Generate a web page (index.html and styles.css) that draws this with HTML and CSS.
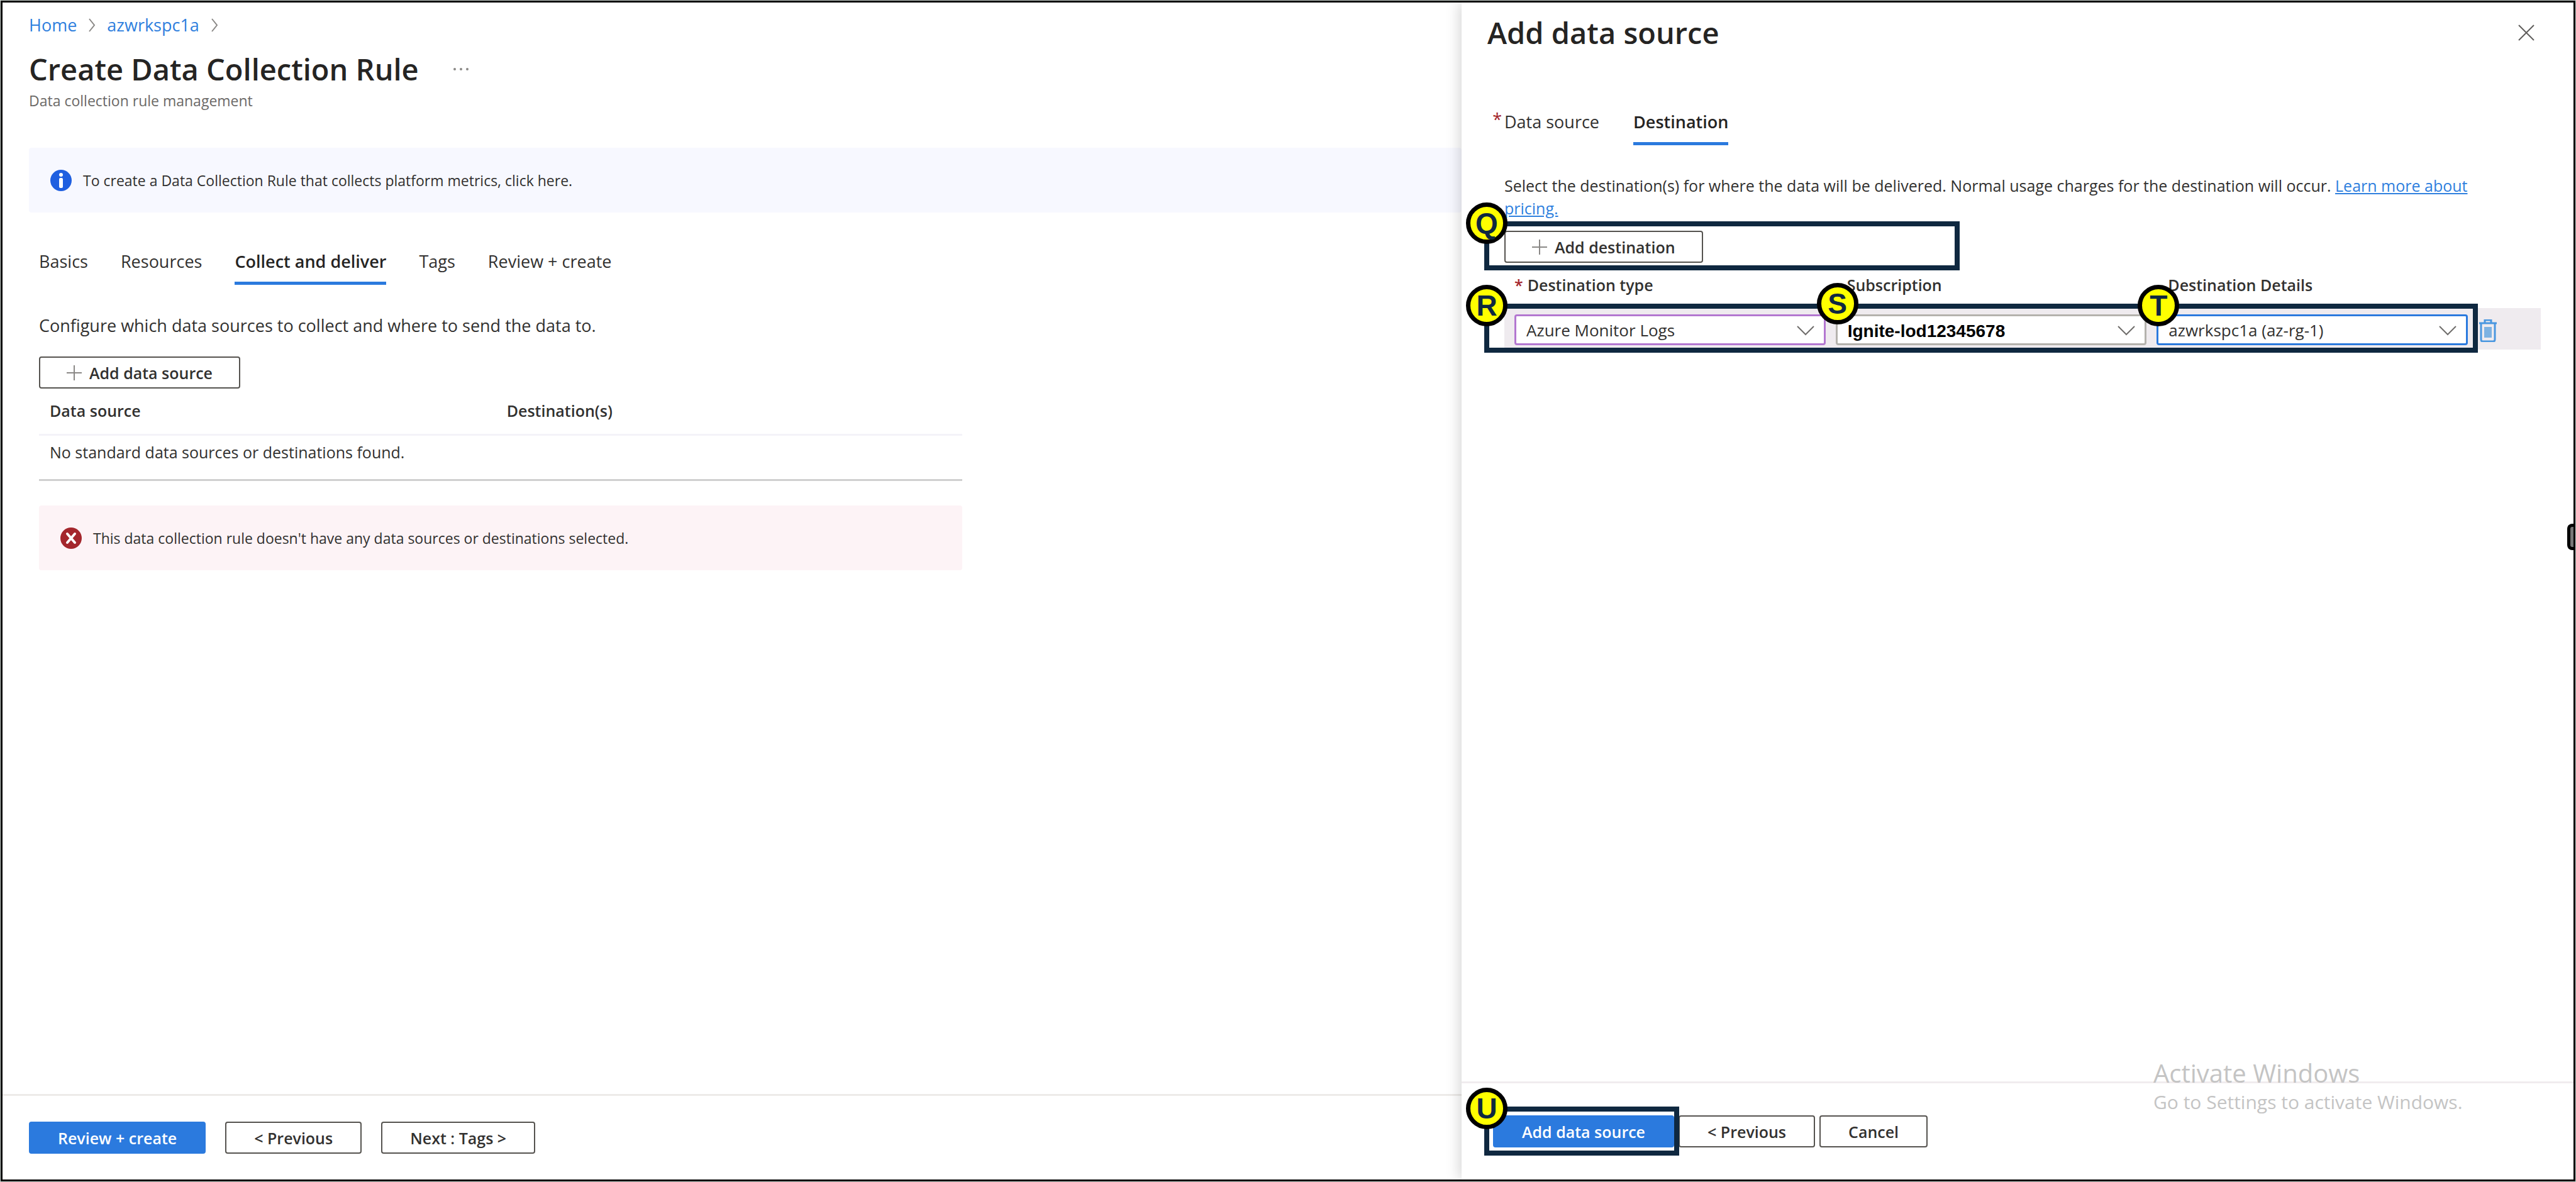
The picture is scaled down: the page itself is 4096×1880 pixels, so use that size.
FILE: index.html
```html
<!DOCTYPE html>
<html lang="en">
<head>
<meta charset="utf-8">
<title>Create Data Collection Rule</title>
<meta name="viewport" content="width=device-width, initial-scale=1">
<link rel="stylesheet" href="styles.css">
</head>
<body>
<div class="frame">
  <main class="page">
    <nav class="breadcrumb" aria-label="Breadcrumb">
      <a href="#">Home</a>
      <svg class="crumb-arrow" viewBox="0 0 12 22" aria-hidden="true"><path d="M2 1l8 10-8 10"/></svg>
      <a href="#">azwrkspc1a</a>
      <svg class="crumb-arrow" viewBox="0 0 12 22" aria-hidden="true"><path d="M2 1l8 10-8 10"/></svg>
    </nav>
    <div class="title-row">
      <h1 class="title">Create Data Collection Rule</h1>
      <button class="more" type="button" aria-label="More">
        <svg viewBox="0 0 26 6" aria-hidden="true"><circle cx="3" cy="3" r="2"/><circle cx="13" cy="3" r="2"/><circle cx="23" cy="3" r="2"/></svg>
      </button>
    </div>
    <p class="subtitle">Data collection rule management</p>

    <div class="banner banner-info">
      <svg class="banner-icon" viewBox="0 0 34 34" aria-hidden="true"><circle cx="17" cy="17" r="17" fill="#1f5fe0"/><circle cx="17" cy="8" r="3" fill="#fff"/><rect x="14" y="13" width="6" height="16" rx="2" fill="#fff"/></svg>
      <span>To create a Data Collection Rule that collects platform metrics, click here.</span>
    </div>

    <div class="content">
      <div class="tabs" role="tablist">
        <button class="tab" role="tab" type="button">Basics</button>
        <button class="tab" role="tab" type="button">Resources</button>
        <button class="tab tab-active" role="tab" type="button" aria-selected="true">Collect and deliver</button>
        <button class="tab" role="tab" type="button">Tags</button>
        <button class="tab" role="tab" type="button">Review + create</button>
      </div>
      <p class="intro">Configure which data sources to collect and where to send the data to.</p>
      <button class="button button-add" type="button">
        <svg class="plus" viewBox="0 0 24 24" aria-hidden="true"><path d="M12 0v24M0 12h24"/></svg>Add data source
      </button>
      <table class="sources">
        <thead><tr><th class="source-column">Data source</th><th>Destination(s)</th></tr></thead>
        <tbody><tr><td colspan="2">No standard data sources or destinations found.</td></tr></tbody>
      </table>
      <div class="banner banner-error">
        <svg class="banner-icon" viewBox="0 0 34 34" aria-hidden="true"><circle cx="17" cy="17" r="17" fill="#a4262c"/><path d="M11 10l12 14M23 10L11 24" stroke="#fff" stroke-width="4" stroke-linecap="round"/></svg>
        <span>This data collection rule doesn't have any data sources or destinations selected.</span>
      </div>
    </div>

    <footer class="page-footer">
      <button class="button button-primary" type="button">Review + create</button>
      <button class="button" type="button">&lt; Previous</button>
      <button class="button" type="button">Next : Tags &gt;</button>
    </footer>
  </main>

  <aside class="panel">
    <header class="panel-header">
      <h2 class="title">Add data source</h2>
      <button class="close" type="button" aria-label="Close">
        <svg viewBox="0 0 26 26" aria-hidden="true"><path d="M1 1l24 24M25 1L1 25"/></svg>
      </button>
    </header>
    <div class="panel-body">
      <div class="tabs" role="tablist">
        <button class="tab" role="tab" type="button"><span class="required required-tab">*</span>Data source</button>
        <button class="tab tab-active" role="tab" type="button" aria-selected="true">Destination</button>
      </div>
      <p class="usage">Select the destination(s) for where the data will be delivered. Normal usage charges for the destination will occur. <a href="#">Learn more about<br>pricing.</a></p>
      <div class="add-destination">
        <button class="button button-add" type="button">
          <svg class="plus" viewBox="0 0 24 24" aria-hidden="true"><path d="M12 0v24M0 12h24"/></svg>Add destination
        </button>
        <div class="callout callout-q"><span class="badge">Q</span></div>
      </div>
      <div class="labels">
        <label for="type"><span class="required">*</span>Destination type</label>
        <label for="subscription">Subscription</label>
        <label for="details">Destination Details</label>
      </div>
      <div class="fields">
        <div class="field field-type">
          <select id="type"><option>Azure Monitor Logs</option></select>
          <svg class="chevron" viewBox="0 0 28 16" aria-hidden="true"><path d="M1 1l13 13L27 1"/></svg>
        </div>
        <div class="field field-subscription">
          <select id="subscription"><option>Ignite-lod12345678</option></select>
          <svg class="chevron" viewBox="0 0 28 16" aria-hidden="true"><path d="M1 1l13 13L27 1"/></svg>
          <span class="badge badge-field badge-s">S</span>
        </div>
        <div class="field field-details">
          <select id="details"><option>azwrkspc1a (az-rg-1)</option></select>
          <svg class="chevron" viewBox="0 0 28 16" aria-hidden="true"><path d="M1 1l13 13L27 1"/></svg>
          <span class="badge badge-field">T</span>
        </div>
        <button class="delete" type="button" aria-label="Delete">
          <svg viewBox="0 0 28 36" aria-hidden="true"><path d="M0 6h28M9 5V1h10v4M3 7v25q0 3 3 3h16q3 0 3-3V7" fill="none" stroke="#4a97e0" stroke-width="3"/><rect x="8" y="12" width="12" height="17" fill="#7db2e2"/></svg>
        </button>
        <div class="callout callout-r"><span class="badge">R</span></div>
      </div>
    </div>
    <footer class="panel-footer">
      <div class="submit">
        <button class="button button-primary" type="button">Add data source</button>
        <div class="callout callout-u"><span class="badge">U</span></div>
      </div>
      <button class="button" type="button">&lt; Previous</button>
      <button class="button" type="button">Cancel</button>
      <div class="watermark">
        <p class="watermark-title">Activate Windows</p>
        <p>Go to Settings to activate Windows.</p>
      </div>
    </footer>
  </aside>
  <span class="edge-handle"></span>
</div>
</body>
</html>
```
FILE: styles.css
```css
* { box-sizing: border-box; }

body {
  margin: 0;
  background: #cfd6d2;
  color: #323130;
  font: 27px/36px "Open Sans", "Noto Sans", sans-serif;
}

h1, h2, p { margin: 0; }
button, select { font: inherit; color: inherit; }
button { margin: 0; padding: 0; background: none; border: 0; }
svg { display: block; flex: none; fill: none; }
a { color: #2f80de; }

.frame {
  position: relative;
  display: grid;
  grid-template-columns: minmax(0, 2320fr) minmax(0, 1768fr);
  min-height: calc(100vh - 2px);
  margin: 1px;
  border: 3px solid #000;
  background: #fff;
}

.page { display: flex; flex-direction: column; padding-top: 18px; }

.breadcrumb { display: flex; align-items: center; gap: 18px; padding-left: 42px; }
.breadcrumb a { text-decoration: none; }
.crumb-arrow { width: 12px; height: 22px; stroke: #8a8886; stroke-width: 2; }

.title-row { display: flex; align-items: center; gap: 54px; margin-top: 20px; padding-left: 42px; }
.title { color: #252423; font-size: 47px; line-height: 64px; font-weight: 600; }
.more svg { width: 26px; height: 6px; fill: #8a8886; }
.subtitle { padding-left: 42px; color: #6b6967; font-size: 23px; }

.banner {
  display: flex;
  align-items: center;
  gap: 18px;
  height: 103px;
  padding-left: 34px;
  border-radius: 4px;
  font-size: 23px;
}
.banner-info { margin: 57px 0 0 42px; background: #f7f8ff; }
.banner-error { margin-top: 39px; background: #fdf3f6; }
.banner-icon { width: 34px; height: 34px; }

.content { max-width: 1526px; padding-left: 58px; }

.tabs { display: flex; gap: 52px; }
.content .tabs { margin-top: 60px; }
.tab { position: relative; padding-bottom: 14px; border-bottom: 5px solid transparent; }
.tab-active { border-color: #2b7ade; color: #252423; font-weight: 600; }
.required { color: #a4262c; }
.required-tab { position: absolute; right: 100%; margin-right: 4px; line-height: 28px; }

.intro { margin-top: 47px; }

.button {
  height: 51px;
  padding: 0 42px;
  border: 2px solid #55534f;
  border-radius: 4px;
  background: #fff;
  font-size: 25px;
  line-height: 36px;
  font-weight: 600;
}
.button-primary { border-color: #2b7ade; background: #2b7ade; color: #fff; }
.button-add { display: flex; align-items: center; gap: 12px; }
.plus { width: 24px; height: 24px; stroke: #8a8886; stroke-width: 2; }
.content .button-add { margin-top: 31px; }

.sources { width: 100%; border-collapse: collapse; table-layout: fixed; text-align: left; }
.source-column { width: 49.5%; }
.sources th { padding: 17px 0 19px 17px; border-bottom: 3px solid #f4f3f8; font-size: 25px; font-weight: 600; }
.sources td { padding: 8px 0 25px 17px; border-bottom: 3px solid #cfcfcf; font-size: 25px; }

.page-footer {
  display: flex;
  gap: 31px;
  margin-top: auto;
  padding: 41px 42px;
  border-top: 3px solid #edebe9;
}
.page-footer .button, .panel-footer .button { padding: 0 44px; }

.panel {
  position: relative;
  display: flex;
  flex-direction: column;
  background: #fff;
  box-shadow: -4px 0 20px rgba(0, 0, 0, .16);
  clip-path: inset(0 0 0 -40px);
}
.panel-header { display: flex; align-items: center; justify-content: space-between; padding: 16px 62px 0 41px; }
.close svg { width: 26px; height: 26px; stroke: #605e5c; stroke-width: 2; }

.panel-body { padding: 92px 52px 0 68px; }
.panel-body .tabs { gap: 54px; }
.usage { margin-top: 46px; font-size: 25px; }

.add-destination { position: relative; margin-top: 18px; }

.labels, .fields { display: grid; grid-template-columns: repeat(3, minmax(0, 1fr)); column-gap: 16px; padding: 0 116px 0 16px; }
.labels { margin-top: 17px; font-size: 25px; font-weight: 600; }
.labels label { padding-left: 18px; }
.labels .required { margin-right: 7px; }
.labels label:first-child { padding-left: 0; }

.fields { position: relative; margin-top: 19px; padding-top: 10px; padding-bottom: 7px; background: #efebef; }
.field { position: relative; }
.field select {
  display: block;
  width: 100%;
  height: 49px;
  padding: 0 60px 0 16px;
  appearance: none;
  border: 3px solid #b4b2ad;
  border-radius: 4px;
  background: #fff;
  font-size: 26px;
}
.field-type select { border-color: #b377d0; }
.field-details select { border-color: #2b7ade; }
.field-subscription select { padding-top: 5px; color: #000; font: bold 28px/36px "Liberation Sans", Arial, sans-serif; }
.chevron { position: absolute; top: 18px; right: 18px; width: 28px; height: 16px; stroke: #706e6c; stroke-width: 2; }
.delete { position: absolute; right: 70px; top: 18px; }
.delete svg { width: 28px; height: 36px; }

.callout { position: absolute; height: 78px; border: 8px solid #0f2840; pointer-events: none; }
.callout-q { top: -15px; left: -32px; width: 756px; }
.callout-r { top: -7px; left: -32px; right: 100px; }
.callout-u { top: -14px; left: -14px; right: -8px; }
.badge {
  position: absolute;
  top: -38px;
  left: -37px;
  z-index: 1;
  width: 66px;
  height: 66px;
  border: 7px solid #000;
  border-radius: 50%;
  background: #ff0;
  color: #0f2840;
  font: bold 46px/52px "Liberation Sans", Arial, sans-serif;
  text-align: center;
}
.badge-field { top: -47px; left: -30px; }
.badge-s { top: -50px; }

.panel-footer {
  position: relative;
  display: flex;
  gap: 7px;
  margin-top: auto;
  padding: 51px 50px;
  border-top: 3px solid #f0ecee;
}
.submit { position: relative; }
.watermark { position: absolute; top: -42px; left: 1100px; color: #c4c4c4; font-size: 30px; line-height: 40px; }
.watermark-title { font-size: 40px; line-height: 52px; }

.edge-handle {
  position: absolute;
  top: 829px;
  right: 0;
  width: 10px;
  height: 42px;
  border: 5px solid #000;
  border-right: 0;
  border-radius: 8px 0 0 8px;
  background: #777;
}
```
